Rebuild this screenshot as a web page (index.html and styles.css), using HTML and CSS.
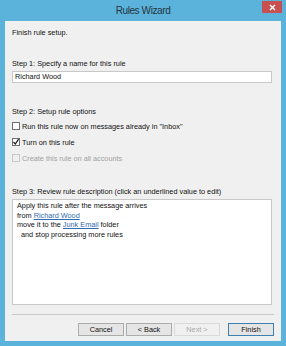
FILE: index.html
```html
<!DOCTYPE html>
<html lang="en">
<head>
    <meta charset="UTF-8">
    <title>Rules Wizard</title>
    <link rel="stylesheet" href="styles.css">
</head>
<body>
    <div class="window">
        <div class="titlebar">
            <span class="title">Rules Wizard</span>
            <div class="close">
                <svg width="7" height="7" viewBox="0 0 7 7"><path d="M1 1L6 6M6 1L1 6" stroke="#fff" stroke-width="1.4"/></svg>
            </div>
        </div>
        <div class="client">
            <div class="heading">Finish rule setup.</div>

            <div class="label step1">Step 1: Specify a name for this rule</div>
            <div class="textbox">Richard Wood</div>

            <div class="label step2">Step 2: Setup rule options</div>
            <div class="option">
                <span class="check"></span>
                <span>Run this rule now on messages already in "Inbox"</span>
            </div>
            <div class="option">
                <span class="check">
                    <svg width="8" height="8" viewBox="0 0 8 8"><path d="M1.5 4L3.3 6L6.6 1.2" fill="none" stroke="#222" stroke-width="1.3"/></svg>
                </span>
                <span>Turn on this rule</span>
            </div>
            <div class="option disabled">
                <span class="check"></span>
                <span>Create this rule on all accounts</span>
            </div>

            <div class="label step3">Step 3: Review rule description (click an underlined value to edit)</div>
            <div class="desc">
                <div>Apply this rule after the message arrives</div>
                <div>from <a>Richard Wood</a></div>
                <div>move it to the <a>Junk Email</a> folder</div>
                <div class="indent">and stop processing more rules</div>
            </div>

            <div class="separator"></div>
            <div class="buttons">
                <button class="btn">Cancel</button>
                <button class="btn">&lt; Back</button>
                <button class="btn" disabled>Next &gt;</button>
                <button class="btn default">Finish</button>
            </div>
        </div>
    </div>
</body>
</html>
```

FILE: styles.css
```css
body {
    margin: 0;
    font-family: "Liberation Sans", Arial, sans-serif;
    font-size: 7.3px;
    color: #111;
}
.window {
    width: 286px;
    height: 346px;
    box-sizing: border-box;
    background: #5bb3db;
    padding: 0 5px 5px 5px;
}
.titlebar {
    height: 21px;
    position: relative;
    display: flex;
    align-items: center;
    justify-content: center;
}
.title {
    font-size: 10px;
    letter-spacing: -0.4px;
    color: #253540;
}
.close {
    position: absolute;
    right: -1px;
    top: 1px;
    width: 20px;
    height: 12px;
    background: #c75050;
    display: flex;
    align-items: center;
    justify-content: center;
}
.client {
    height: 320px;
    box-sizing: border-box;
    background: #f0f0f0;
    padding: 7px 7px 0 7px;
    display: flex;
    flex-direction: column;
}
.heading, .label {
    line-height: 9px;
}
.step1 {
    margin-top: 22px;
}
.textbox {
    margin-top: 3px;
    width: 260px;
    height: 12px;
    box-sizing: border-box;
    border: 1px solid #c8c8c8;
    background: #fff;
    line-height: 10px;
    padding-left: 2px;
}
.step2 {
    margin-top: 24px;
}
.option {
    height: 16px;
    display: flex;
    align-items: center;
    gap: 2px;
}
.step2 + .option {
    margin-top: 2px;
}
.check {
    width: 8px;
    height: 8px;
    box-sizing: border-box;
    border: 1px solid #707070;
    background: #fff;
    display: flex;
    align-items: center;
    justify-content: center;
}
.check svg {
    flex: none;
}
.disabled {
    color: #a0a0a0;
}
.disabled .check {
    border-color: #c8c8c8;
    background: #f0f0f0;
}
.step3 {
    margin-top: 21px;
}
.desc {
    margin-top: 3px;
    width: 260px;
    height: 106px;
    box-sizing: border-box;
    border: 1px solid #c8c8c8;
    background: #fff;
    padding: 1px 4px;
    line-height: 9.5px;
}
.desc a {
    color: #2f6bb3;
    text-decoration: underline;
}
.indent {
    padding-left: 4px;
}
.separator {
    margin-top: 9px;
    width: 262px;
    border-top: 1px solid #c8c8c8;
}
.buttons {
    margin-top: 8px;
    width: 262px;
    display: flex;
    justify-content: flex-end;
    gap: 2px;
}
.btn {
    width: 46px;
    height: 13px;
    margin: 0;
    padding: 0;
    font-family: inherit;
    font-size: 7.3px;
    color: #111;
    background: #e5e5e5;
    border: 1px solid #acacac;
}
.btn[disabled] {
    color: #a8a8a8;
    background: #f0f0f0;
    border-color: #d9d9d9;
}
.default {
    margin-left: 6px;
    border-color: #3c7fb1;
}
```
